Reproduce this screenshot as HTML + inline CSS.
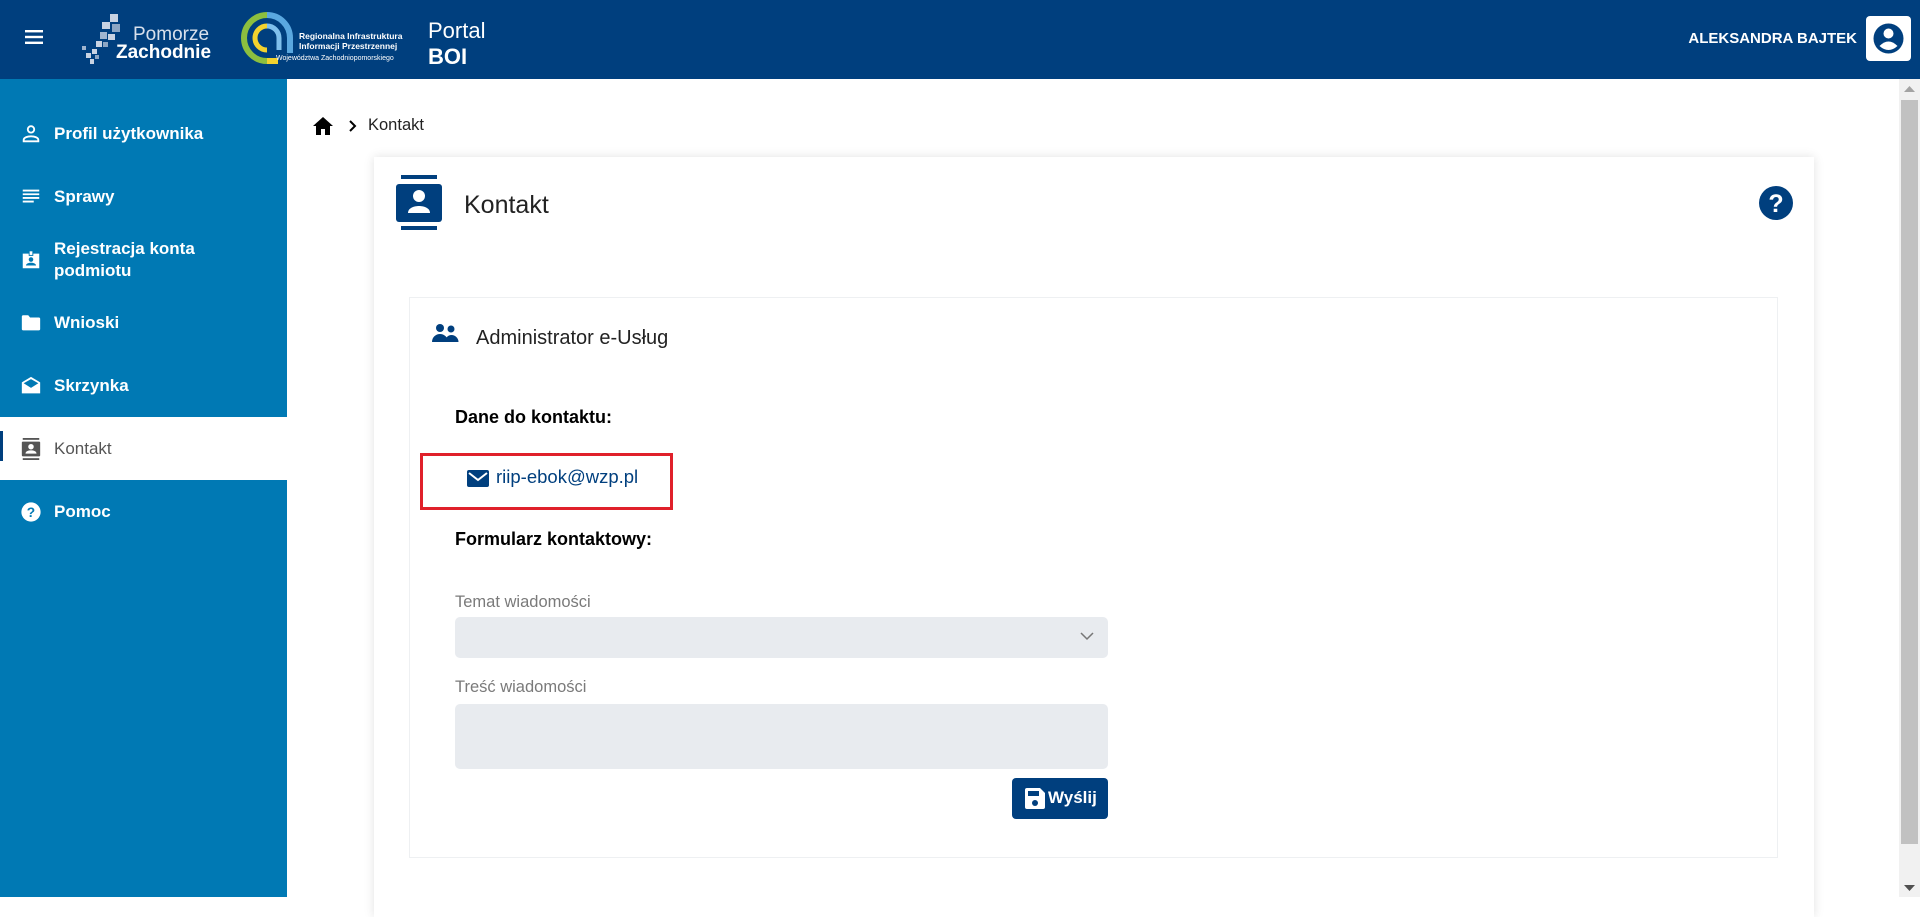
<!DOCTYPE html>
<html><head><meta charset="utf-8">
<style>
*{box-sizing:border-box;margin:0;padding:0}
body{width:1920px;height:897px;overflow:hidden;background:#fff;font-family:"Liberation Sans",sans-serif;position:relative;color:#222}
.abs{position:absolute}
#hdr{left:0;top:0;width:1920px;height:79px;background:#003f7e}
#side{left:0;top:79px;width:287px;height:818px;background:#0079b4}
.mi{position:absolute;left:0;width:287px;color:#fff;font-weight:bold;font-size:17px}
.mi svg{position:absolute;left:20px}
.mi span{position:absolute;left:54px;line-height:22px}
#sb{left:1899px;top:79px;width:21px;height:818px;background:#f1f1f1}
.lbl{color:#7a7a7a;font-size:16.5px}
</style></head><body>
<div id="hdr" class="abs">
 <svg class="abs" style="left:25px;top:30px" width="18" height="14"><rect y="0" width="18" height="2.4" fill="#fff"/><rect y="5.8" width="18" height="2.4" fill="#fff"/><rect y="11.6" width="18" height="2.4" fill="#fff"/></svg>
 <svg class="abs" style="left:80px;top:12px" width="48" height="56">
  <g fill="#c8d3e3"><rect x="30" y="2" width="8" height="8"/><rect x="22" y="10" width="8" height="7"/><rect x="32" y="12" width="8" height="8" opacity=".7"/><rect x="20" y="20" width="7" height="7" opacity=".8"/><rect x="28" y="22" width="7" height="6"/><rect x="16" y="29" width="6" height="6"/><rect x="23" y="30" width="5" height="5" opacity=".7"/><rect x="12" y="37" width="5" height="5"/><rect x="2" y="34" width="4" height="4" opacity=".8"/><rect x="6" y="41" width="5" height="5"/><rect x="10" y="47" width="4" height="5"/><rect x="15" y="43" width="4" height="4" opacity=".7"/></g>
 </svg>
 <div class="abs" style="left:133px;top:25px;color:#d8e0ec;font-size:19px;line-height:20px">Pomorze</div>
 <div class="abs" style="left:116px;top:43px;color:#fff;font-size:19px;font-weight:bold;line-height:20px">Zachodnie</div>
 <svg class="abs" style="left:238px;top:9px" width="58" height="58" viewBox="0 0 58 58">
  <path d="M29 6 A23 23 0 0 0 29 52" stroke="#8cbf3f" stroke-width="6" fill="none"/>
  <path d="M29 6 A23 23 0 0 1 52 29 L52 44" stroke="#5aa8e0" stroke-width="6" fill="none"/>
  <path d="M29 52 L40 52" stroke="#f2d22e" stroke-width="6"/>
  <path d="M29 17 A12 12 0 0 0 29 41" stroke="#f2d22e" stroke-width="5" fill="none"/>
  <path d="M29 17 A12 12 0 0 1 41 29 L41 41" stroke="#7fc0ec" stroke-width="5" fill="none"/>
 </svg>
 <div class="abs" style="left:299px;top:32px;color:#fff;font-size:8.5px;font-weight:bold;line-height:9.5px">Regionalna Infrastruktura<br>Informacji Przestrzennej</div>
 <div class="abs" style="left:276px;top:55px;color:#fff;font-size:7px;line-height:8px">Województwa Zachodniopomorskiego</div>
 <div class="abs" style="left:428px;top:19px;color:#fff;font-size:22px;line-height:24px">Portal</div>
 <div class="abs" style="left:428px;top:45px;color:#fff;font-size:22px;font-weight:bold;line-height:24px">BOI</div>
 <div class="abs" style="right:63px;top:30px;color:#fff;font-size:15px;font-weight:bold;line-height:18px">ALEKSANDRA BAJTEK</div>
 <div class="abs" style="left:1866px;top:16px;width:45px;height:45px;background:#fff;border-radius:4px">
  <svg width="45" height="45" viewBox="0 0 45 45"><circle cx="22.5" cy="22.5" r="15" fill="#003f7e"/><circle cx="22.5" cy="17.5" r="5" fill="#fff"/><path d="M13.5 30 Q22.5 21 31.5 30 Q22.5 38 13.5 30Z" fill="#fff"/></svg>
 </div>
</div>

<div id="side" class="abs">
 <div class="mi" style="top:44px;height:22px"><svg width="22" height="22" viewBox="0 0 24 24" style="top:0"><circle cx="12" cy="7" r="3.5" stroke="#fff" stroke-width="2" fill="none"/><path d="M4 20v-1.5c0-2.5 4-4 8-4s8 1.5 8 4V20z" stroke="#fff" stroke-width="2" fill="none"/></svg><span>Profil użytkownika</span></div>
 <div class="mi" style="top:107px;height:22px"><svg width="22" height="22" viewBox="0 0 24 24"><path d="M3 5h18M3 9h18M3 13h18M3 17h12" stroke="#fff" stroke-width="2"/></svg><span>Sprawy</span></div>
 <div class="mi" style="top:159px;height:44px"><svg width="22" height="22" viewBox="0 0 24 24" style="top:11px"><path d="M3 5h18v16H3z" fill="#fff"/><rect x="10" y="2" width="4" height="5" fill="#fff" stroke="#0079b4" stroke-width="1"/><circle cx="12" cy="11.5" r="2.5" fill="#0079b4"/><path d="M6.5 18c0-2 3-3 5.5-3s5.5 1 5.5 3z" fill="#0079b4"/></svg><span>Rejestracja konta<br>podmiotu</span></div>
 <div class="mi" style="top:233px;height:22px"><svg width="22" height="22" viewBox="0 0 24 24"><path d="M2 5c0-1 .5-1.5 1.5-1.5H9l2 2.5h9.5c1 0 1.5.5 1.5 1.5v11c0 1-.5 1.5-1.5 1.5h-17C2.5 20 2 19.5 2 18.5z" fill="#fff"/></svg><span>Wnioski</span></div>
 <div class="mi" style="top:296px;height:22px"><svg width="22" height="22" viewBox="0 0 24 24"><path d="M12 2 L22 8 V20 H2 V8 Z" fill="#fff"/><path d="M4 9 L12 14 L20 9 L12 4.5 Z" fill="#0079b4"/></svg><span>Skrzynka</span></div>
 <div class="abs" style="left:0;top:338px;width:287px;height:63px;background:#fff"></div>
 <div class="abs" style="left:0;top:352px;width:3px;height:30px;background:#003f7e"></div>
 <div class="mi" style="top:359px;height:22px;color:#555;font-weight:normal"><svg width="22" height="22" viewBox="0 0 24 24"><rect x="3" y="0" width="18" height="2" fill="#555"/><rect x="3" y="22" width="18" height="2" fill="#555"/><rect x="2" y="4" width="20" height="16" rx="1" fill="#555"/><circle cx="12" cy="9.5" r="3" fill="#fff"/><path d="M6 17c0-2.5 3-3.5 6-3.5s6 1 6 3.5z" fill="#fff"/></svg><span>Kontakt</span></div>
 <div class="mi" style="top:422px;height:22px"><svg width="22" height="22" viewBox="0 0 24 24"><circle cx="12" cy="12" r="10.5" fill="#fff"/><text x="12" y="17.5" text-anchor="middle" font-size="15" font-weight="bold" fill="#0079b4" font-family="Liberation Sans">?</text></svg><span>Pomoc</span></div>
</div>

<svg class="abs" style="left:312px;top:116px" width="22" height="20" viewBox="0 0 22 20"><path d="M11 1 L21 10 H18 V19 H13 V13 H9 V19 H4 V10 H1 Z" fill="#000"/></svg>
<svg class="abs" style="left:348px;top:120px" width="10" height="12" viewBox="0 0 10 12"><path d="M2 1 L7 6 L2 11" stroke="#000" stroke-width="2" fill="none"/></svg>
<div class="abs" style="left:368px;top:115px;font-size:16.5px;color:#222;line-height:20px">Kontakt</div>

<div class="abs" style="left:374px;top:157px;width:1440px;height:760px;background:#fff;box-shadow:0 0 10px rgba(0,0,0,.12)"></div>
<svg class="abs" style="left:396px;top:175px" width="46" height="56" viewBox="0 0 46 56"><rect x="5" y="0" width="36" height="4" fill="#003f7e"/><rect x="5" y="51" width="36" height="4" fill="#003f7e"/><rect x="0" y="9" width="46" height="38" rx="3" fill="#003f7e"/><circle cx="23" cy="21" r="6" fill="#fff"/><path d="M12 38c0-5 6-7 11-7s11 2 11 7z" fill="#fff"/></svg>
<div class="abs" style="left:464px;top:190px;font-size:25px;color:#222;line-height:30px">Kontakt</div>
<svg class="abs" style="left:1759px;top:186px" width="34" height="34" viewBox="0 0 34 34"><circle cx="17" cy="17" r="17" fill="#003f7e"/><text x="17" y="26" text-anchor="middle" font-size="25" font-weight="bold" fill="#fff" font-family="Liberation Sans">?</text></svg>

<div class="abs" style="left:409px;top:297px;width:1369px;height:561px;border:1px solid #eef0f2;background:#fff"></div>
<svg class="abs" style="left:431px;top:323px" width="30" height="20" viewBox="0 0 30 20"><circle cx="9" cy="5" r="4" fill="#003f7e"/><circle cx="20" cy="6" r="3.5" fill="#003f7e"/><path d="M1 19c0-5 4-8 8-8s8 3 8 8z" fill="#003f7e"/><path d="M14 19c0-4 3-7 6.5-7s7 3 7 7z" fill="#003f7e"/></svg>
<div class="abs" style="left:476px;top:326px;font-size:20px;color:#222;line-height:24px">Administrator e-Usług</div>

<div class="abs" style="left:455px;top:406px;font-size:18px;font-weight:bold;color:#000;line-height:22px">Dane do kontaktu:</div>
<div class="abs" style="left:420px;top:453px;width:253px;height:57px;border:3px solid #e0202a"></div>
<svg class="abs" style="left:467px;top:470px" width="22" height="17" viewBox="0 0 22 17"><rect x="0" y="0" width="22" height="17" rx="2" fill="#003f7e"/><path d="M2 3 L11 10 L20 3" stroke="#fff" stroke-width="2" fill="none"/></svg>
<div class="abs" style="left:496px;top:466px;font-size:18.5px;color:#003f7e;line-height:22px">riip-ebok@wzp.pl</div>
<div class="abs" style="left:455px;top:528px;font-size:18px;font-weight:bold;color:#000;line-height:22px">Formularz kontaktowy:</div>

<div class="abs lbl" style="left:455px;top:592px;line-height:20px">Temat wiadomości</div>
<div class="abs" style="left:455px;top:617px;width:653px;height:41px;background:#e8ebef;border-radius:5px"></div>
<svg class="abs" style="left:1080px;top:632px" width="14" height="9" viewBox="0 0 14 9"><path d="M1 1 L7 7 L13 1" stroke="#777" stroke-width="1.5" fill="none"/></svg>
<div class="abs lbl" style="left:455px;top:677px;line-height:20px">Treść wiadomości</div>
<div class="abs" style="left:455px;top:704px;width:653px;height:65px;background:#e8ebef;border-radius:5px"></div>
<div class="abs" style="left:1012px;top:778px;width:96px;height:41px;background:#003f7e;border-radius:4px"></div>
<svg class="abs" style="left:1025px;top:788px" width="20" height="21" viewBox="0 0 20 21"><path d="M0 2 Q0 0 2 0 H15 L20 5 V19 Q20 21 18 21 H2 Q0 21 0 19Z" fill="#fff"/><rect x="3" y="3" width="11" height="5" fill="#003f7e"/><circle cx="10" cy="15" r="3" fill="#003f7e"/></svg>
<div class="abs" style="left:1048px;top:787px;font-size:17px;font-weight:bold;color:#fff;line-height:22px">Wyślij</div>

<div id="sb" class="abs">
 <svg class="abs" style="left:5px;top:7px" width="11" height="6"><path d="M0 6 L5.5 0 L11 6Z" fill="#a3a3a3"/></svg>
 <div class="abs" style="left:2px;top:21px;width:17px;height:744px;background:#c1c1c1"></div>
 <svg class="abs" style="left:5px;top:806px" width="11" height="6"><path d="M0 0 L5.5 6 L11 0Z" fill="#505050"/></svg>
</div>
</body></html>
